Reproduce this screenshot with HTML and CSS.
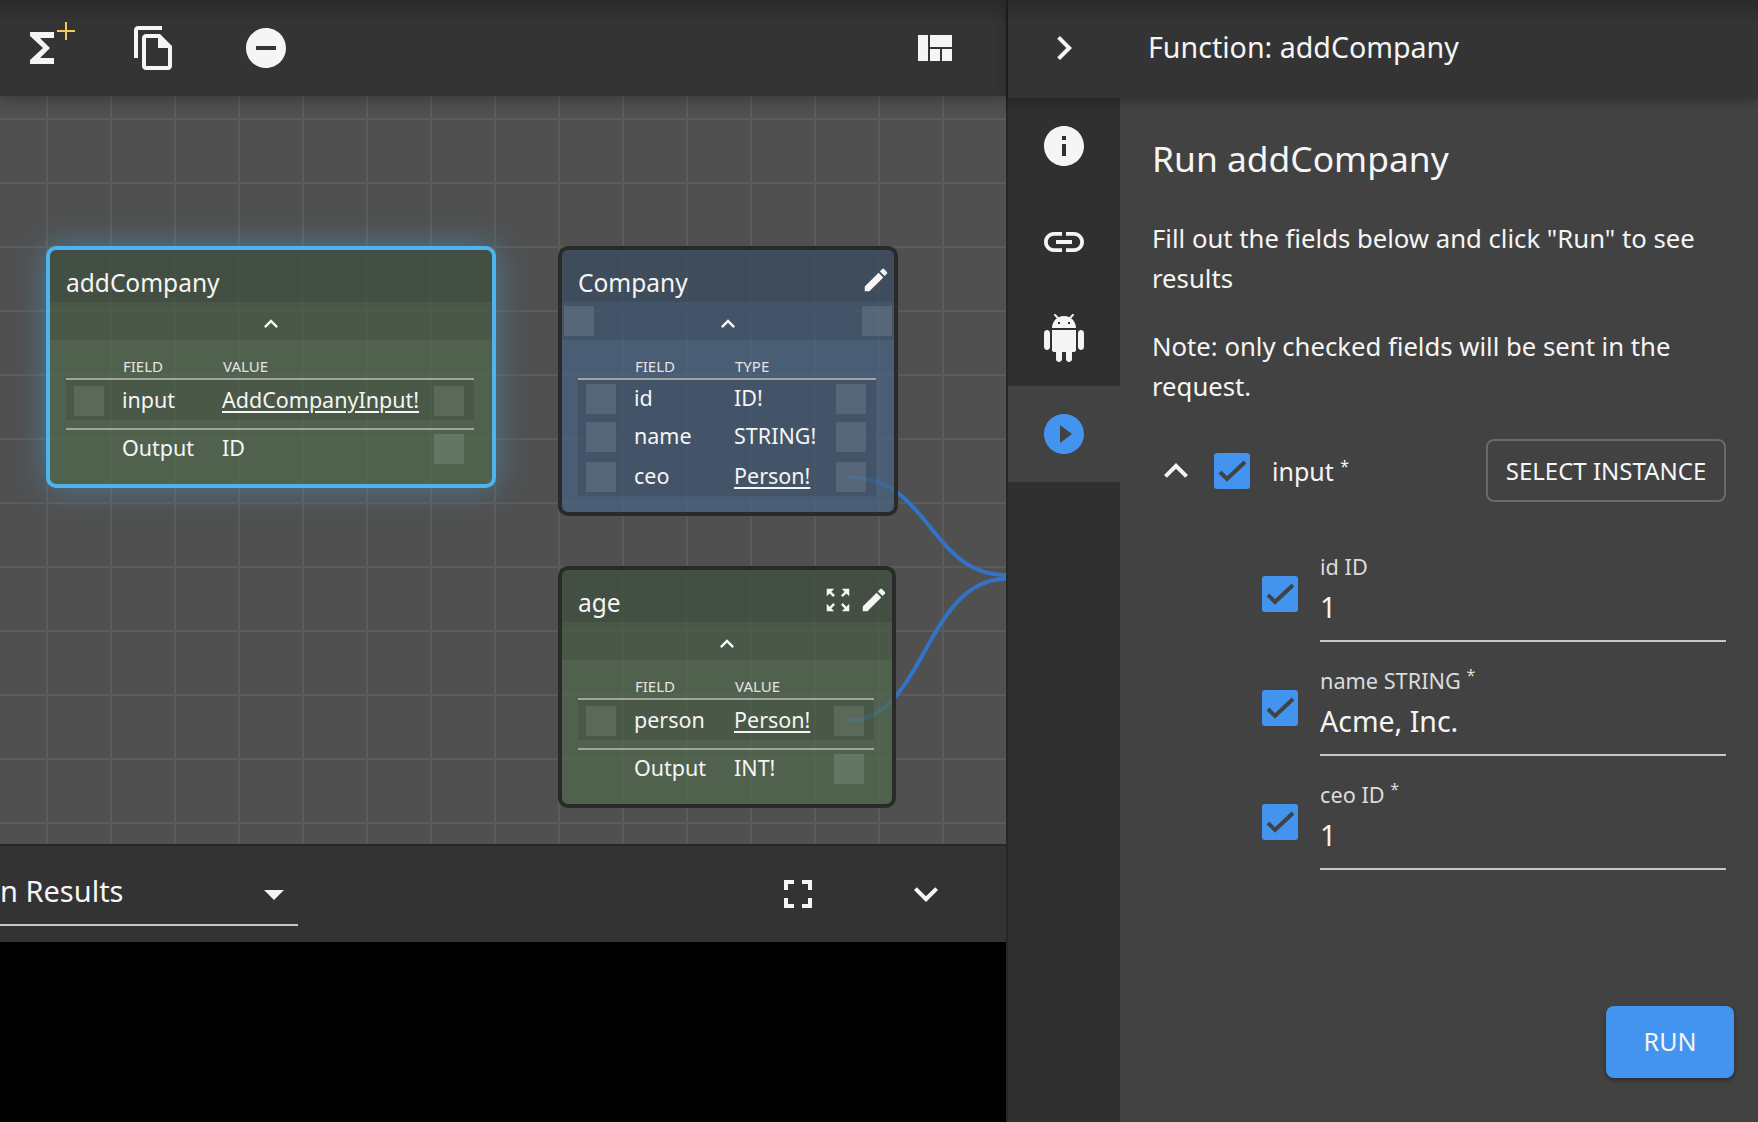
FILE: index.html
```html
<!DOCTYPE html>
<html lang="en">
<head>
    <meta charset="UTF-8">
    <title>Function: addCompany</title>
    <link rel="stylesheet" href="styles.css">
</head>
<body>
<div class="app">

    <div class="left">
        <div class="toolbar">
            <span class="tool tool-sigma">
                <svg class="icon48" viewBox="0 0 24 24"><path d="M18 4H6v2l6.5 6L6 18v2h12v-3h-7l5-5-5-5h7z"/></svg>
                <svg class="plus" viewBox="0 0 18 18"><path d="M9 0v18M0 9h18"/></svg>
            </span>
            <span class="tool tool-copy">
                <svg class="icon48" viewBox="0 0 24 24"><path d="M16 1H4c-1.1 0-2 .9-2 2v14h2V3h12V1zm-1 4H8c-1.1 0-1.99.9-1.99 2L6 21c0 1.1.89 2 1.99 2H19c1.1 0 2-.9 2-2V11l-6-6zM8 21V7h6v5h5v9H8z"/></svg>
            </span>
            <span class="tool tool-minus">
                <svg class="icon48" viewBox="0 0 24 24"><path d="M12 2C6.48 2 2 6.48 2 12s4.48 10 10 10 10-4.48 10-10S17.52 2 12 2zm5 11H7v-2h10v2z"/></svg>
            </span>
            <span class="tool tool-layout">
                <svg class="layout" viewBox="0 0 34 26"><path d="M0 0h10v26H0zM12 0h22v12H12zM12 14h10v12H12zM24 14h10v12H24z"/></svg>
            </span>
        </div>

        <div class="canvas">
            <svg class="wires" viewBox="0 0 1006 748">
                <path d="M849 381C930 381 930 479 1006 479"/>
                <path d="M847 625C925 625 925 483 1006 483"/>
            </svg>

            <div class="node node-green node-selected node-add">
                <div class="node-title">addCompany</div>
                <div class="node-bar">
                    <svg class="chev" viewBox="0 0 24 24"><path d="M12 8l-6 6 1.41 1.41L12 10.83l4.59 4.58L18 14z"/></svg>
                </div>
                <div class="node-body">
                    <div class="thead"><span>FIELD</span><span>VALUE</span></div>
                    <div class="band">
                        <div class="row row-first">
                            <i class="port"></i><span class="f">input</span><a class="v">AddCompanyInput!</a><i class="port"></i>
                        </div>
                    </div>
                    <div class="row row-out">
                        <i></i><span class="f">Output</span><span class="v">ID</span><i class="port port-out"></i>
                    </div>
                </div>
            </div>

            <div class="node node-blue node-company">
                <div class="node-title">Company
                    <svg class="edit" viewBox="0 0 24 24"><path d="M3 17.25V21h3.75L17.81 9.94l-3.75-3.75L3 17.25zM20.71 7.04c.39-.39.39-1.02 0-1.41l-2.34-2.34c-.39-.39-1.02-.39-1.41 0l-1.83 1.83 3.75 3.75 1.83-1.83z"/></svg>
                </div>
                <div class="node-bar">
                    <i class="port bar-port"></i>
                    <svg class="chev" viewBox="0 0 24 24"><path d="M12 8l-6 6 1.41 1.41L12 10.83l4.59 4.58L18 14z"/></svg>
                    <i class="port bar-port"></i>
                </div>
                <div class="node-body">
                    <div class="thead"><span>FIELD</span><span>TYPE</span></div>
                    <div class="band">
                        <div class="row"><i class="port"></i><span class="f">id</span><span class="v">ID!</span><i class="port"></i></div>
                        <div class="row"><i class="port"></i><span class="f">name</span><span class="v">STRING!</span><i class="port"></i></div>
                        <div class="row row-last"><i class="port"></i><span class="f">ceo</span><a class="v">Person!</a><i class="port"></i></div>
                    </div>
                </div>
            </div>

            <div class="node node-green node-age">
                <div class="node-title">age
                    <svg class="edit edit-map" viewBox="0 0 24 24"><path d="M15 3l2.3 2.3-2.89 2.87 1.42 1.42L18.7 6.7 21 9V3zM3 9l2.3-2.3 2.87 2.89 1.42-1.42L6.7 5.3 9 3H3zm6 12l-2.3-2.3 2.89-2.87-1.42-1.42L5.3 17.3 3 15v6zm12-6l-2.3 2.3-2.87-2.89-1.42 1.42 2.89 2.87L15 21h6z"/></svg>
                    <svg class="edit" viewBox="0 0 24 24"><path d="M3 17.25V21h3.75L17.81 9.94l-3.75-3.75L3 17.25zM20.71 7.04c.39-.39.39-1.02 0-1.41l-2.34-2.34c-.39-.39-1.02-.39-1.41 0l-1.83 1.83 3.75 3.75 1.83-1.83z"/></svg>
                </div>
                <div class="node-bar">
                    <svg class="chev" viewBox="0 0 24 24"><path d="M12 8l-6 6 1.41 1.41L12 10.83l4.59 4.58L18 14z"/></svg>
                </div>
                <div class="node-body">
                    <div class="thead"><span>FIELD</span><span>VALUE</span></div>
                    <div class="band">
                        <div class="row row-first">
                            <i class="port"></i><span class="f">person</span><a class="v">Person!</a><i class="port"></i>
                        </div>
                    </div>
                    <div class="row row-out">
                        <i></i><span class="f">Output</span><span class="v">INT!</span><i class="port port-out"></i>
                    </div>
                </div>
            </div>
        </div>

        <div class="bottombar">
            <div class="results-select">
                <div class="results-label">n Results</div>
                <svg class="icon48 results-arrow" viewBox="0 0 24 24"><path d="M7 10l5 5 5-5z"/></svg>
            </div>
            <svg class="icon48 bottom-full" viewBox="0 0 24 24"><path d="M7 14H5v5h5v-2H7v-3zm-2-4h2V7h3V5H5v5zm12 7h-3v2h5v-5h-2v3zM14 5v2h3v3h2V5h-5z"/></svg>
            <svg class="icon48 bottom-more" viewBox="0 0 24 24"><path d="M16.59 8.59L12 13.17 7.41 8.59 6 10l6 6 6-6z"/></svg>
        </div>
        <div class="console"></div>
    </div>

    <div class="right">
        <div class="right-head">
            <svg class="icon48 head-chev" viewBox="0 0 24 24"><path d="M10 6L8.59 7.41 13.17 12l-4.58 4.59L10 18l6-6z"/></svg>
            <div class="head-title">Function: addCompany</div>
        </div>
        <div class="right-main">
            <div class="tabs">
                <div class="tab"><svg class="icon48" viewBox="0 0 24 24"><path d="M12 2C6.48 2 2 6.48 2 12s4.48 10 10 10 10-4.48 10-10S17.52 2 12 2zm1 15h-2v-6h2v6zm0-8h-2V7h2v2z"/></svg></div>
                <div class="tab"><svg class="icon48" viewBox="0 0 24 24"><path d="M3.9 12c0-1.71 1.39-3.1 3.1-3.1h4V7H7c-2.76 0-5 2.24-5 5s2.24 5 5 5h4v-1.9H7c-1.71 0-3.1-1.39-3.1-3.1zM8 13h8v-2H8v2zm9-6h-4v1.9h4c1.71 0 3.1 1.39 3.1 3.1s-1.39 3.1-3.1 3.1h-4V17h4c2.76 0 5-2.24 5-5s-2.24-5-5-5z"/></svg></div>
                <div class="tab"><svg class="icon48" viewBox="0 0 24 24"><path d="M6 18c0 .55.45 1 1 1h1v3.5c0 .83.67 1.5 1.5 1.5s1.5-.67 1.5-1.5V19h2v3.5c0 .83.67 1.5 1.5 1.5s1.5-.67 1.5-1.5V19h1c.55 0 1-.45 1-1V8H6v10zM3.5 8C2.67 8 2 8.67 2 9.5v7c0 .83.67 1.5 1.5 1.5S5 17.33 5 16.5v-7C5 8.67 4.33 8 3.5 8zm17 0c-.83 0-1.5.67-1.5 1.5v7c0 .83.67 1.5 1.5 1.5s1.5-.67 1.5-1.5v-7c0-.83-.67-1.5-1.5-1.5zm-4.97-5.84l1.3-1.3c.2-.2.2-.51 0-.71-.2-.2-.51-.2-.71 0l-1.48 1.48C13.85 1.23 12.95 1 12 1c-.96 0-1.86.23-2.66.63L7.85.15c-.2-.2-.51-.2-.71 0-.2.2-.2.51 0 .71l1.31 1.31C6.97 3.26 6 5.01 6 7h12c0-1.99-.97-3.75-2.47-4.84zM10 5H9V4h1v1zm5 0h-1V4h1v1z"/></svg></div>
                <div class="tab tab-active"><svg class="icon48 icon-blue" viewBox="0 0 24 24"><path d="M12 2C6.48 2 2 6.48 2 12s4.48 10 10 10 10-4.48 10-10S17.52 2 12 2zm-2 14.5v-9l6 4.5-6 4.5z"/></svg></div>
            </div>
            <div class="panel">
                <h2 class="run-title">Run addCompany</h2>
                <p class="run-text run-text-first">Fill out the fields below and click "Run" to see<br>results</p>
                <p class="run-text">Note: only checked fields will be sent in the<br>request.</p>

                <div class="input-head">
                    <svg class="icon48 input-chev" viewBox="0 0 24 24"><path d="M12 8l-6 6 1.41 1.41L12 10.83l4.59 4.58L18 14z"/></svg>
                    <span class="check"><svg viewBox="0 0 36 36"><path d="M6 19l7 7L31 9"/></svg></span>
                    <span class="input-name">input <sup>*</sup></span>
                    <button class="select-btn">SELECT INSTANCE</button>
                </div>

                <div class="fields">
                    <div class="field">
                        <span class="check"><svg viewBox="0 0 36 36"><path d="M6 19l7 7L31 9"/></svg></span>
                        <div class="field-box">
                            <label>id ID</label>
                            <div class="field-value">1</div>
                        </div>
                    </div>
                    <div class="field">
                        <span class="check"><svg viewBox="0 0 36 36"><path d="M6 19l7 7L31 9"/></svg></span>
                        <div class="field-box">
                            <label>name STRING <sup>*</sup></label>
                            <div class="field-value">Acme, Inc.</div>
                        </div>
                    </div>
                    <div class="field">
                        <span class="check"><svg viewBox="0 0 36 36"><path d="M6 19l7 7L31 9"/></svg></span>
                        <div class="field-box">
                            <label>ceo ID <sup>*</sup></label>
                            <div class="field-value">1</div>
                        </div>
                    </div>
                </div>

                <button class="run-btn">RUN</button>
            </div>
        </div>
    </div>

</div>
</body>
</html>
```

FILE: styles.css
```css
* {
    box-sizing: border-box;
}
body {
    margin: 0;
    background: #333;
    color: #f5f5f5;
    font-family: "Noto Sans", sans-serif;
    overflow: hidden;
}
svg {
    display: block;
    fill: #f5f5f5;
}
.icon48 {
    width: 48px;
    height: 48px;
    flex: none;
}
.app {
    display: flex;
    width: 1758px;
    height: 1122px;
}

/* left side */
.left {
    width: 1006px;
    display: flex;
    flex-direction: column;
    flex: none;
}
.toolbar {
    height: 96px;
    flex: none;
    display: flex;
    align-items: center;
    background: linear-gradient(#2a2a2a, #343434 24px);
    position: relative;
    z-index: 2;
    box-shadow: 0 2px 14px rgba(0, 0, 0, 0.35);
}
.tool {
    position: relative;
    flex: none;
}
.tool-sigma {
    margin-left: 18px;
}
.plus {
    position: absolute;
    left: 39px;
    top: -2px;
    width: 18px;
    height: 18px;
    fill: none;
    stroke: #f4c95d;
    stroke-width: 2;
}
.tool-copy {
    margin-left: 64px;
}
.tool-minus {
    margin-left: 64px;
}
.tool-layout {
    margin-left: auto;
    margin-right: 54px;
}
.layout {
    width: 34px;
    height: 26px;
}

.canvas {
    position: relative;
    flex: 1;
    min-height: 0;
    overflow: hidden;
    background-color: #505050;
    background-image:
        linear-gradient(to right, #5b5b5b 2px, transparent 2px),
        linear-gradient(to bottom, #5b5b5b 2px, transparent 2px);
    background-size: 64px 64px;
    background-position: 46px 22px;
}
.wires {
    position: absolute;
    left: 0;
    top: 0;
    width: 1006px;
    height: 748px;
    fill: none;
}
.wires path {
    fill: none;
    stroke: #3273c8;
    stroke-width: 4;
}

/* graph nodes */
.node {
    position: absolute;
    border: 4px solid #2a2a2a;
    border-radius: 10px;
    overflow: hidden;
}
.node-add {
    left: 46px;
    top: 150px;
    width: 450px;
    height: 242px;
}
.node-company {
    left: 558px;
    top: 150px;
    width: 340px;
    height: 270px;
}
.node-age {
    left: 558px;
    top: 470px;
    width: 338px;
    height: 242px;
}
.node-green {
    background: rgba(81, 105, 77, 0.72);
}
.node-blue {
    background: rgba(70, 98, 131, 0.72);
}
.node-selected {
    border-color: #4fb3f0;
    overflow: visible;
    box-shadow: 0 0 34px rgba(79, 179, 240, 0.42);
}
.node-title {
    height: 52px;
    padding: 14px 16px 0;
    font-size: 24.5px;
    line-height: 36px;
    background: rgba(44, 44, 44, 0.34);
    display: flex;
    align-items: center;
    border-radius: 6px 6px 0 0;
}
.edit {
    width: 30px;
    height: 30px;
    margin-left: auto;
    margin-right: -13px;
    margin-top: -6px;
}
.edit-map {
    margin-right: 6px;
}
.edit-map + .edit {
    margin-left: 0;
}
.node-bar {
    height: 38px;
    display: flex;
    align-items: center;
    justify-content: space-between;
    background: rgba(44, 44, 44, 0.17);
    padding: 0 2px;
}
.chev {
    width: 28px;
    height: 28px;
    margin: 6px auto 0;
}
.bar-port {
    flex: none;
}
.node-body {
    padding: 0 18px 0 16px;
}
.thead {
    height: 40px;
    border-bottom: 2px solid #a3a3a3;
    display: grid;
    grid-template-columns: 100px 1fr;
    align-items: end;
    padding-left: 57px;
    padding-bottom: 2px;
    font-size: 15px;
    line-height: 20px;
    color: #e4e4e4;
}
.band {
    background: rgba(44, 44, 44, 0.17);
}
.row {
    display: grid;
    grid-template-columns: 30px 118px 1fr 30px;
    align-items: center;
    padding: 4px 10px 4px 8px;
    font-size: 21.5px;
    line-height: 30px;
}
.row-first {
    padding-top: 6px;
}
.row-last {
    margin-top: 2px;
}
.row-out {
    margin-top: 8px;
    padding-top: 4px;
    border-top: 2px solid #a3a3a3;
}
.f {
    padding-left: 18px;
    margin-top: -2px;
}
.v {
    white-space: nowrap;
    margin-top: -2px;
}
a.v {
    text-decoration: underline;
    text-underline-offset: 3px;
}
.port {
    display: block;
    width: 30px;
    height: 30px;
    background: rgba(255, 255, 255, 0.1);
}
.port-out {
    background: rgba(255, 255, 255, 0.12);
}

/* results bar */
.bottombar {
    height: 98px;
    flex: none;
    background: #333;
    border-top: 2px solid #262626;
    display: flex;
    align-items: flex-start;
    padding-top: 24px;
}
.results-select {
    width: 298px;
    height: 56px;
    border-bottom: 2px solid #c8c8c8;
    display: flex;
    flex: none;
}
.results-label {
    width: 123px;
    flex: none;
    white-space: nowrap;
    text-align: right;
    font-size: 29px;
    line-height: 41px;
}
.results-arrow {
    margin-left: 127px;
}
.bottom-full {
    margin-left: 476px;
}
.bottom-more {
    margin-left: 80px;
}
.console {
    height: 180px;
    flex: none;
    background: #000;
}

/* right side */
.right {
    flex: 1;
    display: flex;
    flex-direction: column;
    border-left: 2px solid #262626;
    min-width: 0;
}
.right-head {
    height: 98px;
    flex: none;
    display: flex;
    align-items: center;
    padding-left: 32px;
    padding-bottom: 2px;
    background: linear-gradient(#2a2a2a, #343434 24px);
    position: relative;
    z-index: 2;
    box-shadow: 0 2px 12px rgba(0, 0, 0, 0.3);
}
.head-title {
    margin-left: 60px;
    margin-top: -2px;
    font-size: 28.6px;
    line-height: 36px;
}
.right-main {
    flex: 1;
    display: flex;
}
.tabs {
    width: 112px;
    flex: none;
    background: #303030;
}
.tab {
    height: 96px;
    display: flex;
    align-items: center;
    justify-content: center;
}
.tab-active {
    background: #424242;
}
.icon-blue {
    fill: #4294ee;
}
.panel {
    flex: 1;
    background: #424242;
    position: relative;
    padding: 0 32px;
}
.run-title {
    margin: 35px 0 0;
    font-size: 35.4px;
    line-height: 50px;
    font-weight: 400;
}
.run-text {
    margin: 28px 0 0;
    font-size: 25.7px;
    line-height: 40px;
    white-space: nowrap;
}
.run-text-first {
    margin-top: 36px;
}
.input-head {
    display: flex;
    align-items: center;
    margin-top: 32px;
}
.input-chev {
    margin-right: 14px;
}
.check {
    display: block;
    width: 36px;
    height: 36px;
    flex: none;
    border-radius: 3px;
    background: #4294ee;
}
.check svg {
    width: 36px;
    height: 36px;
    fill: none;
    stroke: #424242;
    stroke-width: 4;
}
.input-name {
    margin-left: 22px;
    font-size: 25px;
}
sup {
    font-size: 16px;
    line-height: 0;
}
.select-btn {
    margin-left: auto;
    width: 240px;
    height: 63px;
    background: transparent;
    border: 2px solid #6a6a6a;
    border-radius: 8px;
    color: #f5f5f5;
    font: inherit;
    font-size: 24px;
}
.fields {
    margin-top: 26px;
    margin-left: 110px;
}
.field {
    display: flex;
    align-items: flex-start;
    height: 114px;
}
.field .check {
    margin-top: 48px;
}
.field-box {
    margin-left: 22px;
    flex: 1;
    height: 114px;
    padding-top: 24px;
    border-bottom: 2px solid #c8c8c8;
}
.field-box label {
    display: block;
    font-size: 21.7px;
    line-height: 30px;
    color: #dcdcdc;
}
.field-value {
    margin-top: 4px;
    font-size: 28.5px;
    line-height: 42px;
}
.run-btn {
    position: absolute;
    right: 24px;
    bottom: 44px;
    width: 128px;
    height: 72px;
    border: none;
    border-radius: 8px;
    background: #4294ee;
    color: #f5f5f5;
    font: inherit;
    font-size: 25px;
    padding-bottom: 3px;
    box-shadow: 0 2px 4px rgba(0, 0, 0, 0.4);
}
```
